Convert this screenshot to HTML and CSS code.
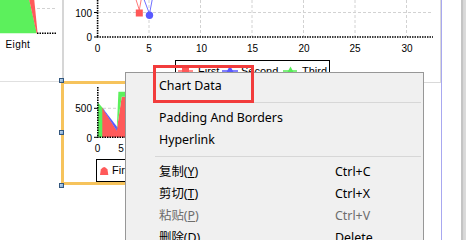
FILE: index.html
```html
<!DOCTYPE html>
<html>

<head>
    <meta http-equiv="Content-Type" content="text/html; charset=utf-8" />
    <title>Report Designer</title>
    <link rel="stylesheet" href="styles.css">
</head>

<body>
    <div class="desk">
        <div class="canvas">
            <div class="guide"></div>

            <!-- chart cut off at the top left -->
            <div class="panel panel_left">
                <svg width="162" height="121" viewBox="-100 -40 162 121">
                    <polygon points="-100,-40 20.4,-40 36.8,33.3 -100,33.3" fill="#5cf05c" />
                    <polygon points="20.4,-40 30.3,-40 37.6,33.3 36.6,33.3" fill="#ff5a5a" />
                    <line x1="37" y1="8.5" x2="56" y2="8.5" class="grid" />
                    <line x1="37" y1="33.3" x2="57" y2="33.3" class="axis" />
                    <text x="5.5" y="48" class="label spaced">Eight</text>
                </svg>
            </div>

            <!-- line chart at the top -->
            <div class="panel panel_top">
                <svg width="375" height="122" viewBox="65 -40 375 122">
                    <line x1="98" y1="12.5" x2="432" y2="12.5" class="grid" />
                    <line x1="149" y1="-40" x2="149" y2="37" class="grid" />
                    <line x1="200.5" y1="-40" x2="200.5" y2="37" class="grid" />
                    <line x1="252" y1="-40" x2="252" y2="37" class="grid" />
                    <line x1="303.5" y1="-40" x2="303.5" y2="37" class="grid" />
                    <line x1="355" y1="-40" x2="355" y2="37" class="grid" />
                    <line x1="406.5" y1="-40" x2="406.5" y2="37" class="grid" />

                    <polyline points="135.5,-2 139.3,10 141.5,-2" fill="none" stroke="#ff7a7a" />
                    <polyline points="143.5,-2 149.5,14 152.5,-2" fill="none" stroke="#7070ff" />
                    <rect x="135.8" y="9.5" width="7" height="7" fill="#ff5757" />
                    <circle cx="149.5" cy="15.3" r="3.7" fill="#5959ff" />

                    <line x1="97.6" y1="-40" x2="97.6" y2="37.5" class="axis" />
                    <line x1="97" y1="37" x2="433" y2="37" class="axis" />
                    <line x1="94" y1="12.5" x2="97.6" y2="12.5" class="tick" />
                    <line x1="94" y1="37" x2="97.6" y2="37" class="tick" />

                    <text x="92" y="16.5" class="label" text-anchor="end">100</text>
                    <text x="92" y="40.5" class="label" text-anchor="end">0</text>
                    <text x="97.5" y="52" class="label" text-anchor="middle">0</text>
                    <text x="149" y="52" class="label" text-anchor="middle">5</text>
                    <text x="201.5" y="52" class="label" text-anchor="middle">10</text>
                    <text x="252.5" y="52" class="label" text-anchor="middle">15</text>
                    <text x="304" y="52" class="label" text-anchor="middle">20</text>
                    <text x="355" y="52" class="label" text-anchor="middle">25</text>
                    <text x="407" y="52" class="label" text-anchor="middle">30</text>

                    <rect x="175.5" y="60.5" width="154" height="30" fill="#fff" stroke="#000" />
                    <line x1="178" y1="71" x2="193" y2="71" stroke="#ff8a8a" stroke-width="2" />
                    <rect x="182" y="67" width="7" height="7" fill="#ff5757" />
                    <text x="198" y="75" class="legend">First</text>
                    <line x1="222" y1="71" x2="238" y2="71" stroke="#8080ff" stroke-width="2" />
                    <polygon points="230,65.5 234.5,74 225.5,74" fill="#5959ff" />
                    <text x="241" y="75" class="legend">Second</text>
                    <line x1="283" y1="71" x2="297" y2="71" stroke="#80f080" stroke-width="2" />
                    <polygon points="290.5,66.5 295,75 286,75" fill="#55ee55" />
                    <text x="302" y="75" class="legend">Third</text>
                </svg>
            </div>

            <!-- selected area chart -->
            <div class="panel panel_sel">
                <svg width="250" height="98" viewBox="64 84 250 98">
                    <line x1="98" y1="108.3" x2="300" y2="108.3" class="grid" />
                    <polygon points="97.8,102.3 103.2,108.6 103.2,137.3 97.8,137.3" fill="#5cf05c" />
                    <polygon points="102.3,107.6 116.7,130.5 121.7,96.7 300,96.7 300,137.3 102.3,137.3" fill="#ff5a5a" />
                    <polygon points="103.6,109.2 117.6,127.6 116.7,130.8 102.6,108.4" fill="#5a5aff" />
                    <polygon points="116.7,130.5 118.4,91.7 300,91.7 300,96.7 121.7,96.7" fill="#5cf05c" />

                    <line x1="97.8" y1="87" x2="97.8" y2="137.6" class="axis" />
                    <line x1="97" y1="137.3" x2="300" y2="137.3" class="axis" />
                    <line x1="94" y1="108.3" x2="97.8" y2="108.3" class="tick" />
                    <line x1="94" y1="137.3" x2="97.8" y2="137.3" class="tick" />

                    <text x="92" y="112" class="label" text-anchor="end">500</text>
                    <text x="92" y="141.5" class="label" text-anchor="end">0</text>
                    <text x="97.5" y="151.5" class="label" text-anchor="middle">0</text>
                    <text x="121" y="151.5" class="label" text-anchor="middle">5</text>
                    <text x="144" y="151.5" class="label" text-anchor="middle">10</text>

                    <rect x="96.5" y="159.5" width="160" height="22" fill="#fff" stroke="#000" />
                    <path d="M100,175 L100.8,169.5 Q104.2,164.5 107.5,169.5 L108.3,175 Z" fill="#ff5a5a" />
                    <text x="112" y="174" class="legend">First</text>
                </svg>
                <span class="handle h_top"></span>
                <span class="handle h_mid"></span>
                <span class="handle h_bot"></span>
            </div>

            <ul class="menu">
                <li class="item"><span class="text">Chart Data</span></li>
                <li class="sep"></li>
                <li class="item"><span class="text">Padding And Borders</span></li>
                <li class="item"><span class="text">Hyperlink</span></li>
                <li class="sep"></li>
                <li class="item"><span class="text">复制(<u>Y</u>)</span><span class="key">Ctrl+C</span></li>
                <li class="item"><span class="text">剪切(<u>T</u>)</span><span class="key">Ctrl+X</span></li>
                <li class="item off"><span class="text">粘贴(<u>P</u>)</span><span class="key">Ctrl+V</span></li>
                <li class="item"><span class="text">删除(<u>D</u>)</span><span class="key">Delete</span></li>
            </ul>

            <div class="callout"></div>
        </div>
        <div class="rail"></div>
    </div>
</body>

</html>
```

FILE: styles.css
```css
    * {
        margin: 0;
        padding: 0;
    }

    body {
        background: #fff;
    }

    li {
        list-style: none;
    }

    svg {
        display: block;
    }

    .desk {
        display: flex;
        width: 466px;
        height: 240px;
        overflow: hidden;
    }

    .canvas {
        flex: 1;
        position: relative;
        overflow: hidden;
        background: #fff;
    }

    .rail {
        width: 5px;
        background: linear-gradient(to right, #c4c4c4 0, #c4c4c4 40%, #d6d6d6 40%, #dcdcdc 100%);
    }

    /* page margin guide */
    .guide {
        position: absolute;
        left: 441px;
        top: 0;
        bottom: 0;
        width: 1px;
        background: #a8a8f0;
    }

    .panel {
        position: absolute;
        background: #fff;
    }

    .panel_left {
        left: -100px;
        top: -40px;
        width: 162px;
        height: 121px;
        border-right: 2px solid #d6d6d6;
        border-bottom: 1px solid #e0e0e0;
    }

    .panel_top {
        left: 65px;
        top: -40px;
        width: 375px;
        height: 122px;
        border-right: 1px solid #d9d9d9;
        border-bottom: 1px solid #d9d9d9;
    }

    .panel_sel {
        left: 61px;
        top: 81px;
        width: 250px;
        height: 98px;
        border: 3px solid #f6c35c;
    }

    .grid {
        stroke: #d2d2d2;
        stroke-width: 1;
        stroke-dasharray: 3 2;
    }

    .axis {
        stroke: #000;
        stroke-width: 1.6;
        stroke-dasharray: 1.5 1;
    }

    .tick {
        stroke: #000;
        stroke-width: 1;
    }

    .label {
        font: 10px "Liberation Sans", Arial, sans-serif;
        fill: #000;
    }

    .spaced {
        letter-spacing: 0.4px;
    }

    .legend {
        font: 11px "Liberation Sans", Arial, sans-serif;
        fill: #000;
    }

    .handle {
        position: absolute;
        left: -5px;
        width: 5px;
        height: 5px;
        box-sizing: border-box;
        border: 1px solid #33577e;
        background: linear-gradient(135deg, #c4dcf2, #7ea6d0);
    }

    .h_top {
        top: -6px;
    }

    .h_mid {
        top: 46px;
    }

    .h_bot {
        top: 99px;
    }

    .menu {
        position: absolute;
        left: 125px;
        top: 72px;
        width: 299px;
        height: 190px;
        box-sizing: border-box;
        padding-top: 2px;
        border: 1px solid #979797;
        background: #f0f0f0;
        font: 12.4px "Noto Sans", "Noto Sans CJK SC", sans-serif;
        color: #000;
    }

    .menu .item {
        display: flex;
        height: 22px;
        line-height: 22px;
        padding-left: 33px;
        white-space: nowrap;
    }

    .menu .text {
        width: 176px;
    }

    .menu .off {
        color: #6d6d6d;
    }

    .menu .sep {
        height: 1px;
        margin: 5px 2px 4px 29px;
        background: #d7d7d7;
    }

    /* red annotation box */
    .callout {
        position: absolute;
        left: 153px;
        top: 65px;
        width: 101px;
        height: 38px;
        box-sizing: border-box;
        border: 3px solid #f23c3c;
    }
```
